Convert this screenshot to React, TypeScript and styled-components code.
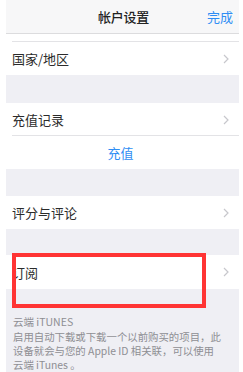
import React from "react";
import styled, { createGlobalStyle } from "styled-components";

const Global = createGlobalStyle`
  html, body { margin: 0; padding: 0; background: #ffffff; }
  body { font-family: "Noto Sans CJK SC", "Noto Sans", sans-serif; }
`;

const Frame = styled.div`
  width: 243px;
  height: 372px;
  padding: 0 4px 0 6px;
  box-sizing: border-box;
  background: #ffffff;
  overflow: hidden;
`;

const Screen = styled.div`
  display: flex;
  flex-direction: column;
  height: 100%;
  background: #efeff4;
`;

const NavBar = styled.div`
  height: 33px;
  flex: none;
  display: grid;
  grid-template-columns: 1fr auto 1fr;
  align-items: center;
  background: #f7f7f8;
  border-bottom: 1px solid #dcdcde;
  padding: 0 6px 0 8px;
`;

const NavTitle = styled.div`
  font-size: 13px;
  font-weight: 500;
  color: #222;
  letter-spacing: -0.2px;
`;

const NavAction = styled.div`
  justify-self: end;
  font-size: 13px;
  color: #2f8ef4;
`;

const Cell = styled.div<{ $h: number; $sep?: boolean; $center?: boolean }>`
  position: relative;
  height: ${(p) => p.$h}px;
  flex: none;
  display: flex;
  align-items: center;
  justify-content: ${(p) => (p.$center ? "center" : "space-between")};
  background: #ffffff;
  padding: 0 10px 0 6px;
  box-sizing: border-box;
  &::after {
    content: "";
    display: ${(p) => (p.$sep ? "block" : "none")};
    position: absolute;
    left: 6px;
    right: 0;
    bottom: 0;
    height: 1px;
    background: #e3e3e6;
  }
`;

const Label = styled.span<{ $blue?: boolean }>`
  font-size: 13px;
  color: ${(p) => (p.$blue ? "#2f8ef4" : "#2b2b2b")};
`;

const Gap = styled.div<{ $h: number }>`
  height: ${(p) => p.$h}px;
  flex: none;
`;

const Highlight = styled.div`
  position: absolute;
  left: 6px;
  top: -2px;
  width: 194px;
  height: 55px;
  border: 4px solid #ff3434;
  box-sizing: border-box;
  pointer-events: none;
`;

const Footer = styled.div`
  padding: 26px 6px 0 7px;
  color: #8e8e93;
`;

const FooterHead = styled.div`
  font-size: 10.5px;
  line-height: 14px;
`;

const FooterText = styled.div`
  font-size: 10.4px;
  line-height: 14px;
  margin-top: 1px;
`;

const Chevron = () => (
  <svg width="6" height="10" viewBox="0 0 6 10">
    <polyline points="1,1 5,5 1,9" fill="none" stroke="#c7c7cc" strokeWidth="1.2" />
  </svg>
);

export default function App() {
  return (
    <>
      <Global />
      <Frame>
        <Screen>
          <NavBar>
            <span />
            <NavTitle>帐户设置</NavTitle>
            <NavAction>完成</NavAction>
          </NavBar>
          <Cell $h={8} $sep />
          <Cell $h={33}>
            <Label>国家/地区</Label>
            <Chevron />
          </Cell>
          <Gap $h={28} />
          <Cell $h={33} $sep>
            <Label>充值记录</Label>
            <Chevron />
          </Cell>
          <Cell $h={33} $center>
            <Label $blue>充值</Label>
          </Cell>
          <Gap $h={27} />
          <Cell $h={33}>
            <Label>评分与评论</Label>
            <Chevron />
          </Cell>
          <Gap $h={26} />
          <Cell $h={34}>
            <Label>订阅</Label>
            <Chevron />
            <Highlight />
          </Cell>
          <Footer>
            <FooterHead>云端 iTUNES</FooterHead>
            <FooterText>
              启用自动下载或下载一个以前购买的项目，此
              <br />
              设备就会与您的 Apple ID 相关联，可以使用
              <br />
              云端 iTunes 。
            </FooterText>
          </Footer>
        </Screen>
      </Frame>
    </>
  );
}
